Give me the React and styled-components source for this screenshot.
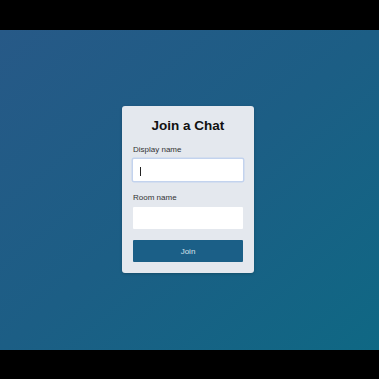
import React from 'react';
import styled, { createGlobalStyle } from 'styled-components';

const GlobalStyle = createGlobalStyle`
  html, body {
    margin: 0;
    padding: 0;
    background: #000;
    font-family: "Liberation Sans", Arial, Helvetica, sans-serif;
  }
`;

const Screen = styled.div`
  height: 379px;
  display: flex;
  flex-direction: column;
  justify-content: center;
`;

const Stage = styled.main`
  height: 320px;
  background: linear-gradient(to bottom right, #275987, #1c5e85 50%, #0f6884);
  display: flex;
  align-items: center;
  justify-content: center;
`;

const Card = styled.form`
  width: 132px;
  box-sizing: border-box;
  margin-right: 3px;
  padding: 12px 11px 11px;
  background: #e4e8ee;
  border-radius: 3px;
  box-shadow: 0 1px 3px rgba(0, 0, 0, 0.2);
  display: flex;
  flex-direction: column;
`;

const Title = styled.h1`
  margin: 0 0 11px;
  font-size: 13.5px;
  line-height: 16px;
  font-weight: 700;
  text-align: center;
  color: #111;
`;

const Field = styled.label`
  display: flex;
  flex-direction: column;
  gap: 4px;
  margin-bottom: ${(p) => p.$spacing}px;
`;

const LabelText = styled.span`
  font-size: 8px;
  line-height: 10px;
  color: #333;
`;

const Input = styled.input`
  box-sizing: border-box;
  height: 22px;
  width: 100%;
  margin: 0;
  padding: 0 6px;
  border: none;
  border-radius: 1px;
  background: #fff;
  font-family: inherit;
  font-size: 10px;
  color: #222;
  outline: none;
  box-shadow: ${(p) => (p.$focused ? '0 0 0 1.5px #c3d3ee' : 'none')};
`;

const Caret = styled.span`
  position: absolute;
  left: 7px;
  top: 7.5px;
  width: 1px;
  height: 9px;
  background: #222;
`;

const InputWrap = styled.div`
  position: relative;
`;

const Button = styled.button`
  height: 22px;
  border: none;
  border-radius: 1px;
  background: #1b5f87;
  color: #d6e2ec;
  font-family: inherit;
  font-size: 8px;
  cursor: pointer;
`;

export default function App() {
  return (
    <>
      <GlobalStyle />
      <Screen>
        <Stage>
          <Card onSubmit={(e) => e.preventDefault()}>
            <Title>Join a Chat</Title>
            <Field $spacing={12}>
              <LabelText>Display name</LabelText>
              <InputWrap>
                <Input $focused type="text" />
                <Caret />
              </InputWrap>
            </Field>
            <Field $spacing={11}>
              <LabelText>Room name</LabelText>
              <Input type="text" />
            </Field>
            <Button type="submit">Join</Button>
          </Card>
        </Stage>
      </Screen>
    </>
  );
}
